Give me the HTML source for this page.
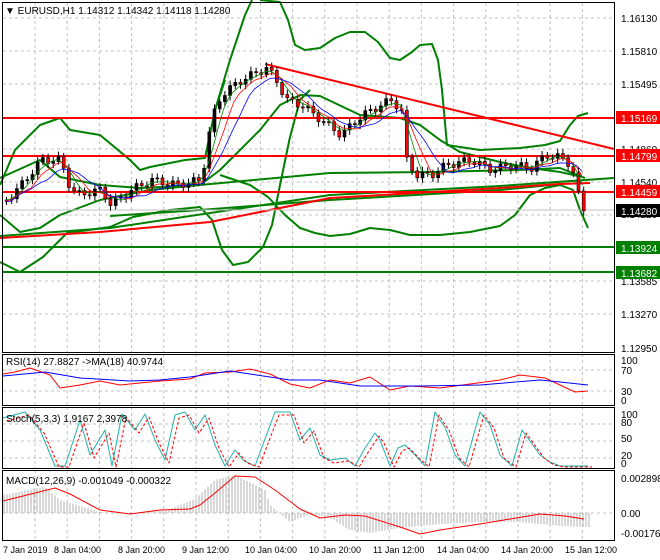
<!DOCTYPE html>
<html><head><meta charset="utf-8"><style>
html,body{margin:0;padding:0;background:#fff;width:660px;height:560px;overflow:hidden}
svg{display:block;font-family:"Liberation Sans",sans-serif}
</style></head><body>
<svg id="s" width="660" height="560" xmlns="http://www.w3.org/2000/svg">
<rect width="660" height="560" fill="#fff"/>
<g id="grid" stroke="#c0c0c0" stroke-dasharray="3,3" stroke-width="1"></g>
<g id="main"></g>
<g fill="none" stroke="#000" stroke-width="1">
<rect x="2.5" y="2.5" width="612" height="350"/>
<rect x="2.5" y="354.5" width="612" height="51"/>
<rect x="2.5" y="407.5" width="612" height="61"/>
<rect x="2.5" y="470.5" width="612" height="70"/>
</g>
<g font-size="10" fill="#000">
<text x="5" y="14">▼ EURUSD,H1  1.14312 1.14342 1.14118 1.14280</text>
<text x="621" y="22">1.16130</text>
<text x="621" y="55">1.15810</text>
<text x="621" y="88">1.15495</text>
<text x="621" y="153">1.14860</text>
<text x="621" y="186">1.14540</text>
<text x="621" y="218">1.14220</text>
<text x="621" y="285">1.13585</text>
<text x="621" y="318">1.13270</text>
<text x="621" y="352">1.12950</text>
</g>
<g font-size="10">
<rect x="616" y="111" width="44" height="13" fill="#f00"/><text x="621" y="122" fill="#fff">1.15169</text>
<rect x="616" y="149" width="44" height="13" fill="#f00"/><text x="621" y="160" fill="#fff">1.14799</text>
<rect x="616" y="185" width="44" height="13" fill="#f00"/><text x="621" y="196" fill="#fff">1.14459</text>
<rect x="616" y="204" width="44" height="13" fill="#000"/><text x="621" y="215" fill="#fff">1.14280</text>
<rect x="616" y="241" width="44" height="13" fill="#008000"/><text x="621" y="252" fill="#fff">1.13924</text>
<rect x="616" y="266" width="44" height="13" fill="#008000"/><text x="621" y="277" fill="#fff">1.13682</text>
</g>
<g font-size="10" fill="#000">
<text x="6" y="365">RSI(14) 27.8827  -&gt;MA(18) 40.9744</text>
<text x="621" y="364">100</text><text x="621" y="374">70</text><text x="621" y="395">30</text><text x="621" y="404">0</text>
<text x="6" y="422">Stoch(5,3,3) 1,9167 2,3978</text>
<text x="621" y="418">100</text><text x="621" y="426">80</text><text x="621" y="442">50</text><text x="621" y="459">20</text><text x="621" y="467">0</text>
<text x="6" y="484">MACD(12,26,9) -0.001049 -0.000322</text>
<text x="621" y="482">0.002898</text><text x="621" y="517">0.00</text><text x="621" y="537">-0.001763</text>
</g>
<g font-size="9" fill="#000">
<text x="3" y="553">7 Jan 2019</text><text x="54" y="553">8 Jan 04:00</text><text x="118" y="553">8 Jan 20:00</text>
<text x="182" y="553">9 Jan 12:00</text><text x="245" y="553">10 Jan 04:00</text><text x="309" y="553">10 Jan 20:00</text>
<text x="373" y="553">11 Jan 12:00</text><text x="437" y="553">14 Jan 04:00</text><text x="501" y="553">14 Jan 20:00</text>
<text x="565" y="553">15 Jan 12:00</text>
</g>
</svg>
<script>
var NS="http://www.w3.org/2000/svg",M=document.getElementById('main'),G=document.getElementById('grid');
function el(t,a,p){var e=document.createElementNS(NS,t);for(var k in a)e.setAttribute(k,a[k]);(p||M).appendChild(e);return e}
function pl(pts,c,w,p,dash){var s=pts.map(function(q){return q[0]+','+q[1]}).join(' ');var a={points:s,fill:'none',stroke:c,'stroke-width':w,'stroke-linejoin':'round'};if(dash)a['stroke-dasharray']=dash;el('polyline',a,p)}
function interp(k,x){for(var i=0;i<k.length-1;i++){if(x>=k[i][0]&&x<=k[i+1][0]){var t=(x-k[i][0])/(k[i+1][0]-k[i][0]);return k[i][1]+t*(k[i+1][1]-k[i][1])}}return k[k.length-1][1]}
for(var x=35;x<614;x+=32.2)el('line',{x1:x,y1:3,x2:x,y2:352},G);
[18,51,84,149,182,215,281,314].forEach(function(y){el('line',{x1:3,y1:y,x2:614,y2:y},G)});
[[354,405],[407,468],[470,540]].forEach(function(r){for(var x=35;x<614;x+=32.2)el('line',{x1:x,y1:r[0],x2:x,y2:r[1]},G)});
[370,391,424,441,458,513].forEach(function(y){el('line',{x1:3,y1:y,x2:614,y2:y},G)});
pl([[0,262],[20,272],[43,257],[67,233],[110,227],[133,217],[170,210],[200,207],[212,220],[222,250],[233,265],[248,262],[263,247],[272,225],[280,185],[290,137],[300,100],[310,90]],'#008000',2);
pl([[215,110],[230,60],[245,15],[252,0]],'#008000',2);
pl([[260,0],[280,2],[288,20],[295,45],[305,50],[320,48],[335,38],[350,32],[365,32],[378,42],[390,58],[400,60],[412,52],[420,45],[432,44],[438,60],[442,90],[447,145],[480,150],[520,148],[545,145],[560,141],[570,125],[578,116],[588,113]],'#008000',2);
pl([[220,175],[250,185],[268,197],[285,215],[300,228],[315,233],[330,236],[350,234],[370,228],[390,230],[410,235],[440,235],[470,232],[500,226],[515,215],[530,195],[545,188],[560,185],[573,190],[580,210],[588,228]],'#008000',2);
pl([[0,185],[15,150],[40,125],[60,118],[70,130],[100,135],[130,160],[140,170],[150,167],[185,160],[205,158],[215,110],[225,80]],'#008000',2);
pl([[0,215],[20,232],[40,228],[60,215],[100,200],[150,190],[200,185],[220,170],[260,130],[280,105],[300,95],[320,96],[360,115],[400,118],[420,125],[440,140],[460,152],[500,162],[530,168],[560,172],[578,176]],'#008000',2);
pl([[0,178],[40,160],[60,177],[100,185],[140,188],[200,185],[330,173],[430,172],[520,170],[560,168],[585,178]],'#008000',2);
pl([[0,236],[110,228],[330,195],[500,186],[614,178]],'#008000',2);
pl([[110,216],[200,210],[330,200],[500,190],[560,184]],'#008000',2);
pl([[0,238],[100,232],[210,222],[330,198],[500,188],[560,184],[590,183]],'#f00',2);
el('line',{x1:3,y1:118,x2:614,y2:118,stroke:'#f00','stroke-width':2});
el('line',{x1:3,y1:156,x2:614,y2:156,stroke:'#f00','stroke-width':2});
el('line',{x1:3,y1:192,x2:614,y2:192,stroke:'#f00','stroke-width':2});
el('line',{x1:3,y1:210,x2:614,y2:210,stroke:'#c0c0c0','stroke-width':1});
el('line',{x1:3,y1:247,x2:614,y2:247,stroke:'#008000','stroke-width':2});
el('line',{x1:3,y1:272,x2:614,y2:272,stroke:'#008000','stroke-width':2});
el('line',{x1:265,y1:64,x2:614,y2:149,stroke:'#f00','stroke-width':2});
var K=[[5,200],[20,185],[40,160],[60,160],[65,180],[75,195],[100,190],[110,205],[130,190],[150,180],[175,185],[200,180],[210,120],[220,95],[240,80],[265,68],[275,80],[285,100],[300,105],[320,120],[340,135],[355,120],[370,110],[390,100],[400,110],[405,160],[415,175],[430,175],[445,165],[470,160],[490,170],[510,165],[530,168],[545,155],[560,158],[570,165],[575,185],[580,210],[588,210]];
var cl=[],prev=interp(K,5);
for(var i=0;i<112;i++){var x=5+i*5.2;var c=interp(K,x)+4*Math.sin(i*1.7);cl.push([x,c]);var o=prev;prev=c;
var hi=Math.min(o,c)-3-2*Math.abs(Math.sin(i*2.3)),lo=Math.max(o,c)+3+2*Math.abs(Math.cos(i*1.1));
el('line',{x1:x+1.5,y1:hi,x2:x+1.5,y2:lo,stroke:'#000'});
el('rect',{x:x,y:Math.min(o,c),width:3,height:Math.max(1,Math.abs(o-c)),fill:c<o?'#000':'#f00',stroke:'#000','stroke-width':0.6});}
function sma(a,n,off){var r=[];for(var i=0;i<a.length;i++){var s=0,k=0;for(var j=Math.max(0,i-n+1);j<=i;j++){s+=a[j][1];k++}r.push([a[i][0],s/k+off])}return r}
pl(sma(cl,4,0),'#008000',0.8);pl(sma(cl,6,1),'#f00',0.8);pl(sma(cl,9,2),'#00f',0.8);
var R=[[3,374],[15,372],[30,368],[50,375],[60,388],[80,385],[100,381],[120,385],[160,381],[190,379],[205,373],[230,372],[250,369],[270,374],[290,384],[310,388],[330,380],[350,383],[370,377],[390,390],[410,386],[440,388],[470,384],[500,380],[520,375],[545,378],[560,385],[575,392],[588,391]];
pl(R,'#f00',1,null);
pl([[3,376],[45,372],[80,378],[130,381],[160,380],[190,377],[230,371],[290,380],[320,380],[360,386],[420,386],[480,385],[540,380],[560,382],[588,385]],'#00f',1);
var S=[[3,418],[25,412],[40,430],[55,466],[65,466],[80,420],[90,455],[105,430],[112,466],[122,414],[135,430],[145,414],[155,440],[165,460],[175,415],[185,412],[195,430],[205,415],[215,445],[225,466],[235,450],[243,460],[255,466],[275,412],[290,412],[300,440],[310,428],[320,455],[330,460],[345,458],[355,466],[365,448],[375,433],[380,440],[390,466],[398,448],[405,445],[415,455],[425,466],[435,412],[440,420],[445,427],[455,455],[465,466],[480,412],[490,425],[500,455],[512,466],[522,430],[540,455],[550,462],[560,466],[588,466]];
pl(S,'#20b2aa',1);pl(S.map(function(p){return [p[0]+4,Math.min(467,p[1]+3)]}),'#f00',1,null,'3,2');
for(var x=4;x<590;x+=3){var v=interp([[3,495],[45,487],[60,500],[100,512],[130,514],[170,509],[195,499],[215,480],[235,475],[265,490],[270,505],[290,522],[310,514],[330,518],[350,530],[370,533],[400,528],[440,524],[480,522],[520,522],[540,524],[560,526],[588,527]],x);el('line',{x1:x,y1:513,x2:x,y2:v,stroke:'#b0b0b0'})}
pl([[3,501],[55,488],[70,494],[100,510],[130,514],[160,510],[190,509],[200,505],[215,493],[235,476],[255,477],[275,490],[300,509],[320,518],[345,515],[365,516],[400,527],[420,534],[440,530],[480,524],[540,514],[565,516],[584,519]],'#f00',1);
</script>
</body></html>
